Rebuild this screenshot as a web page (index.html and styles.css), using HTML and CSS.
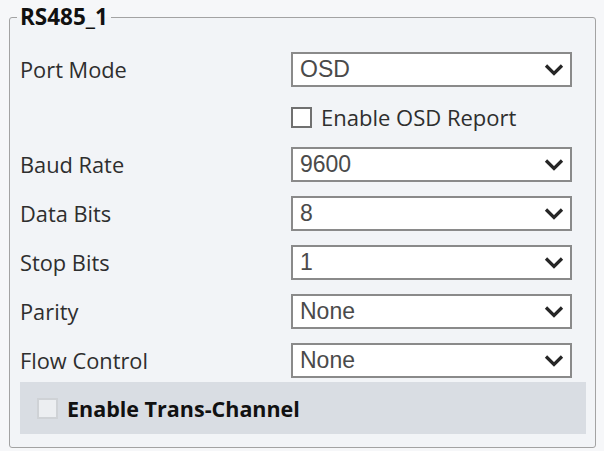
FILE: index.html
```html
<!DOCTYPE html>
<html lang="en">
<head>
    <meta charset="UTF-8">
    <title>RS485 Settings</title>
    <link rel="stylesheet" href="styles.css">
</head>
<body>
    <fieldset class="panel">
        <legend>RS485_1</legend>
        <div class="form">
            <label class="label">Port Mode</label>
            <div class="select"><span>OSD</span><svg viewBox="0 0 20 12"><path d="M2 2 L10 10 L18 2"/></svg></div>

            <span></span>
            <label class="check"><span class="box"></span>Enable OSD Report</label>

            <label class="label">Baud Rate</label>
            <div class="select"><span>9600</span><svg viewBox="0 0 20 12"><path d="M2 2 L10 10 L18 2"/></svg></div>

            <label class="label">Data Bits</label>
            <div class="select"><span>8</span><svg viewBox="0 0 20 12"><path d="M2 2 L10 10 L18 2"/></svg></div>

            <label class="label">Stop Bits</label>
            <div class="select"><span>1</span><svg viewBox="0 0 20 12"><path d="M2 2 L10 10 L18 2"/></svg></div>

            <label class="label">Parity</label>
            <div class="select"><span>None</span><svg viewBox="0 0 20 12"><path d="M2 2 L10 10 L18 2"/></svg></div>

            <label class="label">Flow Control</label>
            <div class="select"><span>None</span><svg viewBox="0 0 20 12"><path d="M2 2 L10 10 L18 2"/></svg></div>
        </div>

        <!-- trans-channel toggle sits on its own grey strip -->
        <div class="trans">
            <span class="box light"></span>
            <b>Enable Trans-Channel</b>
        </div>
    </fieldset>
</body>
</html>
```

FILE: styles.css
```css
* {
    box-sizing: border-box;
}

body {
    margin: 0;
    background: #f6f7f9;
    font-family: 'Open Sans', sans-serif;
    color: #2e2e2e;
}

.panel {
    margin: 7px 8px 0 9px;
    padding: 25px 9px 13px 10px;
    border: 1.5px solid #a3a3a3;
    border-radius: 3px;
    background: #f2f4f7;
    min-width: 0;
}

.panel legend {
    margin-left: -3px;
    padding: 0 3px;
    font-size: 22.5px;
    line-height: 20px;
    font-weight: bold;
    color: #111;
}

.form {
    display: grid;
    grid-template-columns: 271px 281px;
    grid-template-rows: 35px 32px repeat(5, 35px);
    row-gap: 14px;
}

.label {
    display: flex;
    align-items: center;
    font-size: 21.8px;
    color: #2e2e2e;
}

.select {
    display: flex;
    align-items: center;
    justify-content: space-between;
    padding: 0 6px 0 7px;
    background: #fff;
    border: 2px solid #8a8a8a;
    font-family: 'Liberation Sans', Arial, sans-serif;
    font-size: 23px;
    color: #4a4a4a;
}

.select svg {
    width: 20px;
    height: 13px;
    fill: none;
    stroke: #262626;
    stroke-width: 3.2;
}

.check {
    display: flex;
    align-items: center;
    gap: 9px;
    font-size: 22px;
    color: #2e2e2e;
}

.box {
    width: 21px;
    height: 21px;
    border: 2px solid #707070;
    background: #fff;
}

.box.light {
    border-color: #cfd2d6;
    background: #eceef1;
}

.trans {
    display: flex;
    align-items: center;
    gap: 9px;
    height: 52px;
    margin-top: 4px;
    padding-left: 17px;
    background: #d9dde3;
}

.trans b {
    font-size: 21.5px;
    color: #111;
}
```
